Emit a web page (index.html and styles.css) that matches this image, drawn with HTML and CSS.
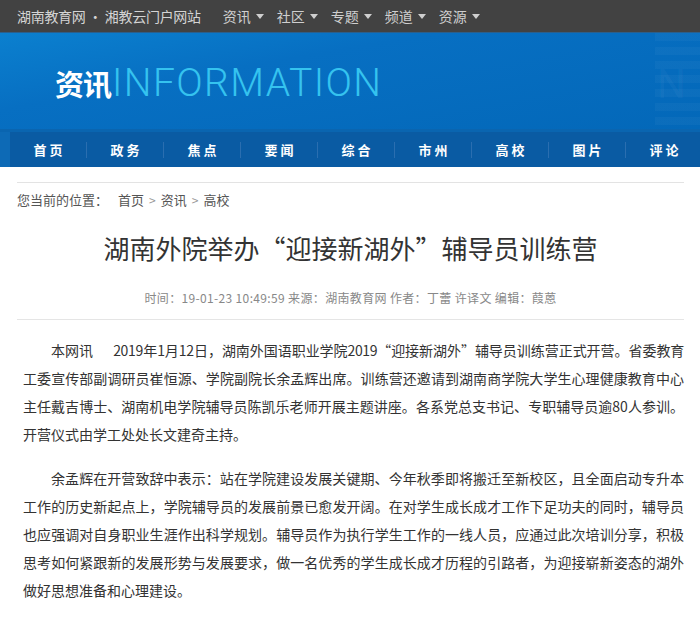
FILE: index.html
```html
<!DOCTYPE html>
<html lang="zh-CN">
<head>
    <meta charset="UTF-8">
    <title>湖南外院举办“迎接新湖外”辅导员训练营</title>
    <link rel="stylesheet" href="styles.css">
</head>
<body>
    <div class="topbar">
        <span class="site">湖南教育网 · 湘教云门户网站</span>
        <ul class="topmenu">
            <li>资讯<i class="tri"></i></li>
            <li>社区<i class="tri"></i></li>
            <li>专题<i class="tri"></i></li>
            <li>频道<i class="tri"></i></li>
            <li>资源<i class="tri"></i></li>
        </ul>
    </div>

    <div class="banner">
        <div class="banner-title"><b>资讯</b><span>INFORMATION</span></div>
        <div class="banner-deco">N</div>
    </div>

    <div class="navwrap">
        <ul class="nav">
            <li>首页</li>
            <li>政务</li>
            <li>焦点</li>
            <li>要闻</li>
            <li>综合</li>
            <li>市州</li>
            <li>高校</li>
            <li>图片</li>
            <li>评论</li>
        </ul>
    </div>

    <div class="main">
        <div class="crumb">您当前的位置：<a class="first">首页</a><span class="gt">&gt;</span><a>资讯</a><span class="gt">&gt;</span><a>高校</a></div>

        <h1 class="title">湖南外院举办“迎接新湖外”辅导员训练营</h1>
        <div class="meta">时间：19-01-23 10:49:59 来源：湖南教育网 作者：丁蕾 许译文 编辑：葭蒽</div>

        <div class="content">
            <p class="first-para">本网讯&emsp;&ensp;2019年1月12日，湖南外国语职业学院2019“迎接新湖外”辅导员训练营正式开营。省委教育工委宣传部副调研员崔恒源、学院副院长余孟辉出席。训练营还邀请到湖南商学院大学生心理健康教育中心主任戴吉博士、湖南机电学院辅导员陈凯乐老师开展主题讲座。各系党总支书记、专职辅导员逾80人参训。开营仪式由学工处处长文建奇主持。</p>
            <p>余孟辉在开营致辞中表示：站在学院建设发展关键期、今年秋季即将搬迁至新校区，且全面启动专升本工作的历史新起点上，学院辅导员的发展前景已愈发开阔。在对学生成长成才工作下足功夫的同时，辅导员也应强调对自身职业生涯作出科学规划。辅导员作为执行学生工作的一线人员，应通过此次培训分享，积极思考如何紧跟新的发展形势与发展要求，做一名优秀的学生成长成才历程的引路者，为迎接崭新姿态的湖外做好思想准备和心理建设。</p>
        </div>
    </div>
</body>
</html>
```

FILE: styles.css
```css
body {
    margin: 0;
    width: 700px;
    overflow: hidden;
    font-family: "Noto Sans CJK SC", "Liberation Sans", sans-serif;
    color: #333;
    background: #fff;
}
ul {
    margin: 0;
    padding: 0;
    list-style: none;
}

/* top bar */
.topbar {
    height: 32px;
    background: #424242;
    display: flex;
    align-items: center;
    padding-left: 17px;
    color: #d4d4d4;
    font-size: 14px;
    border-bottom: 1px solid #2b5f8c;
}
.site {
    letter-spacing: -0.3px;
}
.topmenu {
    display: flex;
    margin-left: 22px;
}
.topmenu li {
    display: flex;
    align-items: center;
    margin-right: 13px;
    color: #cfcfcf;
}
.tri {
    display: inline-block;
    margin-left: 5px;
    border-left: 4px solid transparent;
    border-right: 4px solid transparent;
    border-top: 5px solid #cfcfcf;
}

/* banner */
.banner {
    position: relative;
    height: 96px;
    background: linear-gradient(170deg, #0b80cf 0%, #076fc2 35%, #0368b9 100%);
    border-bottom: 3px solid #0a65b0;
    overflow: hidden;
}
.banner-title {
    display: flex;
    align-items: baseline;
    padding: 32px 0 0 55px;
    line-height: 36px;
}
.banner-title b {
    font-size: 29px;
    color: #fff;
    font-weight: 700;
    letter-spacing: -1px;
}
.banner-title span {
    font-family: Roboto, "Liberation Sans", sans-serif;
    font-weight: 300;
    font-size: 39px;
    color: #35c3ef;
    letter-spacing: 1.4px;
    margin-left: 1px;
}
.banner-deco {
    position: absolute;
    left: 655px;
    top: 0;
    width: 60px;
    height: 96px;
    background: repeating-linear-gradient(180deg, rgba(255,255,255,0.03) 0 8px, rgba(255,255,255,0) 8px 14px);
    color: rgba(255,255,255,0.05);
    font-family: Roboto, sans-serif;
    font-size: 40px;
    padding: 28px 0 0 2px;
    box-sizing: border-box;
}

/* nav */
.navwrap {
    background: #0d6ab6;
    padding-left: 10px;
}
.nav {
    display: flex;
    height: 35px;
    background: #0a5ba3;
    align-items: center;
}
.nav li {
    flex: none;
    width: 77px;
    text-align: center;
    color: #fff;
    font-size: 13px;
    font-weight: 700;
    letter-spacing: 3px;
    text-indent: 3px;
    border-right: 1px solid #2a6eb0;
    line-height: 16px;
    box-sizing: border-box;
}

/* main */
.main {
    padding: 0 16px 0 17px;
}
.crumb {
    margin-top: 15px;
    border-top: 1px solid #e3e3e3;
    padding-top: 7px;
    font-size: 13px;
    line-height: 20px;
    color: #555;
}
.crumb a {
    color: #555;
}
.crumb .first {
    margin-left: 10px;
}
.crumb .gt {
    color: #999;
    margin: 0 5px;
    font-size: 12px;
}
.title {
    margin: 20px 0 0;
    text-align: center;
    font-size: 26px;
    font-weight: 400;
    line-height: 36px;
    color: #333;
}
.meta {
    margin-top: 23px;
    text-align: center;
    font-size: 12px;
    color: #888;
    line-height: 18px;
    letter-spacing: 0.35px;
    padding-bottom: 12px;
    border-bottom: 1px solid #e5e5e5;
}
.content {
    padding: 16px 0 0 6px;
}
.content p {
    margin: 0 0 16px;
    font-size: 14px;
    line-height: 28px;
    text-indent: 2em;
    text-align: justify;
    color: #333;
}
.content .first-para::first-line {
    letter-spacing: -0.35px;
}
```
